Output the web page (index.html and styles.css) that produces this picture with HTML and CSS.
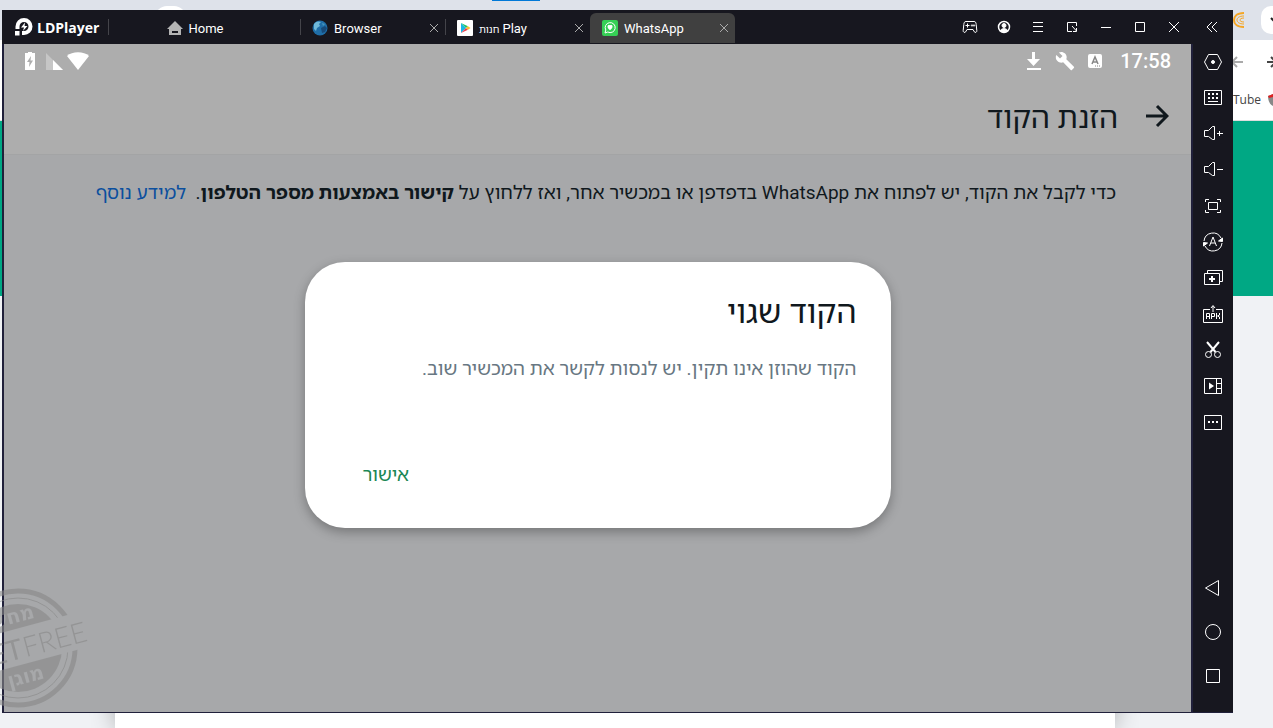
FILE: index.html
```html
<!DOCTYPE html>
<html lang="he">
<head>
    <meta charset="UTF-8">
    <meta name="viewport" content="width=device-width, initial-scale=1.0">
    <title>LDPlayer - WhatsApp</title>
    <link rel="stylesheet" href="styles.css">
</head>
<body>
    <div class="desktop">

        <!-- Browser window behind the emulator -->
        <div class="browser">
            <div class="browser-tabs">
                <div class="browser-pill"></div>
                <div class="browser-progress"></div>
                <div class="browser-end">
                    <svg class="moon" width="12" height="16" viewBox="0 0 12 16" fill="none" stroke="#f5a623"><path d="M11 1C3 1 1 5 1 8s2 7 10 7" stroke-width="2"/><path d="M11 4C6 4 4 6 4 8s2 4 7 4M11 6c-3 0-4 1-4 2s1 2 4 2"/></svg>
                    <div class="search-tabs"><svg width="10" height="6" viewBox="0 0 10 6" fill="none" stroke="#222" stroke-width="2"><path d="M1 1l4 4 4-4"/></svg></div>
                </div>
            </div>
            <div class="browser-toolbar">
                <svg width="14" height="14" viewBox="0 0 14 14" fill="none" stroke="#aaa" stroke-width="2"><path d="M14 7H3M8 2L3 7l5 5"/></svg>
                <svg width="6" height="14" viewBox="0 0 6 14" fill="none" stroke="#444" stroke-width="2"><path d="M0 7h6M4 2l5 5-5 5"/></svg>
            </div>
            <div class="browser-bookmarks">
                <a href="#">YouTube</a>
                <svg width="5" height="14" viewBox="0 0 5 14"><path d="M0 3l5-2v12C2 12 0 8 0 3z" fill="#888"/><path d="M0 3l5-2v3L1 5z" fill="#e02020"/></svg>
            </div>
            <div class="page">
                <div class="page-banner"></div>
                <div class="page-card"></div>
            </div>
        </div>

        <div class="emulator">
            <header class="titlebar">
                <div class="logo">
                    <svg width="18" height="18" viewBox="0 0 18 18"><path d="M2.500 11V8.500a6.500 6.500 0 1 1 6.500 6.500H7" fill="none" stroke="#fff" stroke-width="4"/><path d="M0 13h4.500v4.500H0z" fill="#fff"/><path d="M10 4.500L6 9.500h3L8 13l4.500-5H9.600z" fill="#fff"/></svg>
                    <span>LDPlayer</span>
                </div>
                <nav class="tabs">
                    <div class="tab tab-home">
                        <svg width="16" height="16" viewBox="0 0 16 16"><path d="M8 1l8 8h-2v6H2V9H0z" fill="#b4b4b4"/><path d="M5 11h6v2H5z" fill="#17171f"/></svg>
                        <span>Home</span>
                    </div>
                    <div class="tab">
                        <svg width="16" height="16" viewBox="0 0 16 16"><circle cx="8" cy="8" r="7.500" fill="#1f6ea8"/><path d="M2 4c2-3 5-3 7-2L7 4l1 2-3 2-1 3-2-2z" fill="#6fb8d8"/><path d="M9 8l4-2 2 2-2 4-3 1z" fill="#174a7a"/><path d="M10 3l3 1-2 2z" fill="#4796bd"/></svg>
                        <span>Browser</span>
                        <button class="close" aria-label="Close Browser"><svg width="10" height="10" viewBox="0 0 10 10"><path d="M1 1l8 8M9 1L1 9"/></svg></button>
                    </div>
                    <div class="tab">
                        <svg width="16" height="16" viewBox="0 0 16 16"><rect width="16" height="16" rx="1" fill="#fff"/><path d="M4 3v10l5-5z" fill="#19b7e6"/><path d="M4 3l5 5 2-1.800z" fill="#22c46b"/><path d="M4 13l5-5 2 1.800z" fill="#ee3d4a"/><path d="M11 6.200L9 8l2 1.800L13.500 8z" fill="#fbc02d"/></svg>
                        <span dir="ltr"><small>חנות</small> Play</span>
                        <button class="close" aria-label="Close Play"><svg width="10" height="10" viewBox="0 0 10 10"><path d="M1 1l8 8M9 1L1 9"/></svg></button>
                    </div>
                    <div class="tab tab-active">
                        <svg width="16" height="16" viewBox="0 0 16 16"><rect width="16" height="16" rx="2" fill="#36cf55"/><path d="M3 13l.800-3a5 5 0 1 1 2 2z" fill="none" stroke="#fff"/><path d="M5.500 6.500c0-1.500 1.500-2 2.500-1.200 1-.800 2.800-.300 2.500 1.500C10.300 8.500 9 9.500 8 10.200 7 9.500 5.500 8.500 5.500 6.500z" fill="#fff"/></svg>
                        <span>WhatsApp</span>
                        <button class="close" aria-label="Close WhatsApp"><svg width="10" height="10" viewBox="0 0 10 10"><path d="M1 1l8 8M9 1L1 9"/></svg></button>
                    </div>
                </nav>
                <div class="window-buttons">
                    <button aria-label="Gamepad"><svg width="16" height="14" viewBox="0 0 16 14"><path d="M4 1.500h8c1.500 0 2 1 2.200 3l.600 6c.200 2-1.500 2.500-2.500 1.300L11 9.500H5l-1.300 2.300C2.700 13 1 12.500 1.200 10.500l.600-6c.200-2 .700-3 2.200-3zM5.500 3.500v4M3.500 5.500h4"/><circle cx="10" cy="5.500" r=".7"/><circle cx="12" cy="5.500" r=".7"/></svg></button>
                    <button aria-label="Account"><svg width="14" height="14" viewBox="0 0 14 14"><circle cx="7" cy="7" r="5.500" stroke-width="1.500"/><circle cx="7" cy="5.500" r="2" fill="#fff"/><path d="M3.500 10.500c1-2.500 6-2.500 7 0-2 2-5 2-7 0z" fill="#fff"/></svg></button>
                    <button aria-label="Menu"><svg width="10" height="10" viewBox="0 0 10 10" shape-rendering="crispEdges"><path d="M0 .500h10M0 4.500h10M0 9.500h10"/></svg></button>
                    <button aria-label="Mini window"><svg width="12" height="12" viewBox="0 0 12 12"><path d="M10.500 5V1.500h-9v9H6M6 5l4.500 5M10.500 7v3.500H7"/></svg></button>
                    <button aria-label="Minimize"><svg width="10" height="10" viewBox="0 0 10 10"><path d="M0 5.500h10"/></svg></button>
                    <button aria-label="Maximize"><svg width="10" height="10" viewBox="0 0 10 10"><path d="M.500 .500h9v9h-9z"/></svg></button>
                    <button aria-label="Close"><svg width="12" height="12" viewBox="0 0 12 12"><path d="M1 1l10 10M11 1L1 11"/></svg></button>
                    <button class="collapse" aria-label="Collapse sidebar"><svg width="12" height="12" viewBox="0 0 12 12"><path d="M6 1L1 6l5 5M11 1L6 6l5 5"/></svg></button>
                </div>
            </header>

            <div class="workspace">
                <main class="screen" dir="rtl">
                    <div class="statusbar" dir="ltr">
                        <div class="status-left">
                            <svg width="12" height="20" viewBox="0 0 12 20"><path d="M4 1h4v1h3v17H1V2h3z" fill="#fff"/><path d="M7 5l-4 6h2.500L5 16l4-6.500H6.500z" fill="#adadad"/></svg>
                            <svg width="17" height="18" viewBox="0 0 17 18"><path d="M0 1v17h17z" fill="#c6c6c6"/><path d="M7 8v10h10z" fill="#fff"/></svg>
                            <svg width="22" height="18" viewBox="0 0 22 18"><path d="M0 4C5-1 17-1 22 4L11 18z" fill="#fff"/></svg>
                        </div>
                        <div class="status-right">
                            <svg width="16" height="20" viewBox="0 0 16 20" fill="#fff"><path d="M6 1h3v7h5l-6.500 7L1 8h5zM1 17h14v2H1z"/></svg>
                            <svg width="20" height="20" viewBox="0 0 24 24" fill="#fff"><path d="M22.700 19l-9.100-9.100c.900-2.300.400-5-1.500-6.900-2-2-5-2.400-7.400-1.300L9 6 6 9 1.600 4.700C.400 7.100.900 10.100 2.900 12.100c1.900 1.900 4.600 2.400 6.900 1.500l9.100 9.100c.400.400 1 .400 1.400 0l2.300-2.300c.500-.400.500-1.100.100-1.400z"/></svg>
                            <svg width="14" height="16" viewBox="0 0 14 16"><rect y="1" width="14" height="14" rx="2" fill="#fff"/><path d="M4 11l3-7 3 7M5 9h4" fill="none" stroke="#888" stroke-width="1.500"/><path d="M7 13h1M9 13h1M11 13h1" stroke="#888"/></svg>
                            <span class="clock">17:58</span>
                        </div>
                    </div>

                    <div class="app">
                        <div class="app-header">
                            <button class="back" aria-label="חזרה"><svg width="24" height="24" viewBox="0 0 24 24"><path d="M1 12h21M12 2l10 10-10 10" fill="none" stroke="#10181d" stroke-width="3"/></svg></button>
                            <h1>הזנת הקוד</h1>
                        </div>
                        <p class="instructions">כדי לקבל את הקוד, יש לפתוח את WhatsApp בדפדפן או במכשיר אחר, ואז ללחוץ על <b>קישור באמצעות מספר הטלפון</b>.&nbsp; <a href="#">למידע נוסף</a></p>

                        <div class="overlay">
                            <div class="dialog" role="alertdialog" aria-labelledby="dialog-title">
                                <h2 id="dialog-title">הקוד שגוי</h2>
                                <p>הקוד שהוזן אינו תקין. יש לנסות לקשר את המכשיר שוב.</p>
                                <button class="confirm">אישור</button>
                            </div>
                        </div>
                    </div>
                </main>

                <aside class="sidebar">
                    <button aria-label="Settings"><svg width="20" height="20" viewBox="0 0 20 20"><path d="M5.500 2.500h9l4 7.500-4 7.500h-9l-4-7.500z"/><circle cx="10" cy="10" r="1.500" fill="#fff"/></svg></button>
                    <button aria-label="Keyboard"><svg width="20" height="20" viewBox="0 0 20 20"><path d="M1.500 2.500h17v14h-17z"/><path d="M5 6h2M9 6h2M13 6h2M5 10h2M9 10h2M13 10h2" stroke-width="2"/><path d="M5 13.500h10"/></svg></button>
                    <button aria-label="Volume up"><svg width="20" height="20" viewBox="0 0 20 20"><path d="M1.500 6.500h4l4-4h2v13h-2l-4-3h-4zM14 9.500h6M16.500 7v5"/></svg></button>
                    <button aria-label="Volume down"><svg width="20" height="20" viewBox="0 0 20 20"><path d="M1.500 6.500h4l4-4h2v13h-2l-4-3h-4zM14 9.500h6"/></svg></button>
                    <button aria-label="Full screen"><svg width="20" height="20" viewBox="0 0 20 20"><path d="M5.500 6.500h9v7h-9zM2.500 6V3.500H6M14 3.500h3.500V6M17.500 14v2.500H14M6 16.500H2.500V14"/></svg></button>
                    <button aria-label="Auto rotate"><svg width="20" height="20" viewBox="0 0 20 20"><path d="M1 9a9 9 0 0 1 17-3M19 11a9 9 0 0 1-17 3M6.500 14L10 5l3.500 9M8 11h4"/><path d="M19.500 6v3.500l-4-.500zM.500 14v-3.500l4 .500z" fill="#fff"/></svg></button>
                    <button aria-label="Multi instance"><svg width="20" height="20" viewBox="0 0 20 20"><path d="M1.500 5.500h15v11h-15zM4.500 5V2.500h15v11H17"/><path d="M6 11h6M9 8v6" stroke-width="2"/></svg></button>
                    <button aria-label="Install APK"><svg width="20" height="20" viewBox="0 0 20 20"><path d="M7 5.500H.500v13h19v-13H13M10 8V2M8 4l2-2.500L12 4M3.500 15V9.500h3V15M3.500 12.500h3M8.500 15V9.500h3v3h-3M13.500 9v6M16.500 9v2l-2 1 2 1v2"/></svg></button>
                    <button aria-label="Screenshot"><svg width="20" height="20" viewBox="0 0 20 20"><path d="M4 2l8.500 10M16 2L7.500 12" stroke-width="2"/><circle cx="5.500" cy="14.500" r="3"/><circle cx="14.500" cy="14.500" r="3"/></svg></button>
                    <button aria-label="Record"><svg width="20" height="20" viewBox="0 0 20 20"><path d="M1.500 2.500h17v15h-17zM13.500 2.500v15M13.500 7.500h5M13.500 12.500h5"/><path d="M6 6.500l5 3.500-5 3.500z" fill="#fff" stroke="none"/></svg></button>
                    <button aria-label="More"><svg width="20" height="20" viewBox="0 0 20 20"><path d="M1.500 3.500h17v14h-17z"/><path d="M5 10h2M9 10h2M13 10h2" stroke-width="2"/></svg></button>
                    <div class="nav-keys">
                        <button aria-label="Back"><svg width="20" height="20" viewBox="0 0 20 20"><path d="M15.500 2.500v15L2.500 10z"/></svg></button>
                        <button aria-label="Home"><svg width="20" height="20" viewBox="0 0 20 20"><circle cx="10" cy="10" r="7.500"/></svg></button>
                        <button aria-label="Recent apps"><svg width="20" height="20" viewBox="0 0 20 20"><path d="M3.500 3.500h13v13h-13z"/></svg></button>
                    </div>
                </aside>
            </div>
        </div>

        <!-- NetFree stamp, drawn over the corner -->
        <svg class="stamp" width="90" height="124" viewBox="0 0 90 124">
            <defs>
                <mask id="band">
                    <rect x="-50" width="140" height="124" fill="#fff"/>
                    <g transform="rotate(-15 18 62)">
                        <rect x="-60" y="43" width="160" height="36" fill="#000"/>
                        <text class="stamp-word" x="15" y="37" fill="#000">מחשב</text>
                        <text class="stamp-word" x="18" y="98" fill="#000">מוגן</text>
                    </g>
                </mask>
            </defs>
            <g mask="url(#band)" opacity="0.6">
                <circle cx="18" cy="62" r="57" fill="none" stroke="#888" stroke-width="5"/>
                <circle cx="18" cy="62" r="50" fill="none" stroke="#888" stroke-width="1"/>
                <circle cx="18" cy="62" r="44" fill="#888"/>
            </g>
            <g transform="rotate(-15 18 62)" opacity="0.6" fill="#888">
                <text class="stamp-name" x="22" y="73" text-anchor="end">NET</text>
                <text class="stamp-name stamp-light" x="23" y="73">FREE</text>
            </g>
        </svg>
    </div>
</body>
</html>
```

FILE: styles.css
```css
* {
    box-sizing: border-box;
}

body {
    margin: 0;
    font-family: Roboto, "Noto Sans Hebrew", "Open Sans", "Noto Sans", sans-serif;
    color: #10181d;
}

button {
    padding: 0;
    border: none;
    background: none;
    font-family: inherit;
    cursor: pointer;
}

svg {
    display: block;
    flex-shrink: 0;
}

h1, h2, p {
    margin: 0;
    font-weight: 400;
}

a {
    text-decoration: none;
}

.desktop {
    position: relative;
    height: 100vh;
    overflow: hidden;
}

/* Browser behind */
.browser {
    display: flex;
    flex-direction: column;
    height: 100%;
    background-color: #fff;
}

.browser-tabs {
    display: flex;
    height: 40px;
    padding-left: 155px;
    background-color: #dee2ea;
}

.browser-pill {
    width: 31px;
    height: 28px;
    margin-top: 6px;
    border-radius: 12px;
    background-color: #fff;
}

.browser-progress {
    width: 48px;
    height: 1px;
    margin-left: 306px;
    background-color: #0078d7;
}

.browser-end {
    display: flex;
    gap: 16px;
    width: 40px;
    margin-left: auto;
    padding-top: 6px;
    overflow: hidden;
}

.moon {
    margin-top: 6px;
}

.search-tabs {
    display: flex;
    flex-shrink: 0;
    align-items: center;
    width: 28px;
    height: 28px;
    padding-left: 9px;
    border-radius: 10px;
    background-color: #fff;
}

.browser-toolbar {
    display: flex;
    align-items: center;
    justify-content: flex-end;
    gap: 24px;
    height: 44px;
}

.browser-bookmarks {
    display: flex;
    align-items: center;
    justify-content: flex-end;
    gap: 7px;
    height: 37px;
    padding-bottom: 5px;
    border-bottom: 1px solid #ddd;
}

.browser-bookmarks a {
    font-family: "Open Sans", sans-serif;
    font-size: 12px;
    color: #444;
}

.page {
    display: flex;
    flex: 1;
    flex-direction: column;
    justify-content: space-between;
    background-color: #f0f2f5;
}

.page-banner {
    height: 175px;
    background-color: #00a884;
}

.page-card {
    height: 50px;
    margin: 0 158px 0 115px;
    background-color: #fff;
    box-shadow: 0 0 24px rgba(0, 0, 0, 0.3);
}

/* Emulator window */
.emulator {
    position: absolute;
    top: 10px;
    right: 40px;
    bottom: 15px;
    left: 2px;
    display: flex;
    flex-direction: column;
    background-color: #17171f;
}

.titlebar {
    display: flex;
    flex-shrink: 0;
    height: 34px;
    color: #fff;
}

.logo {
    display: flex;
    align-items: center;
    gap: 4px;
    width: 106px;
    padding-left: 13px;
    font-family: "Open Sans", sans-serif;
    font-size: 14px;
    font-weight: 700;
}

.tabs {
    display: flex;
    align-items: flex-end;
}

.tab {
    position: relative;
    display: flex;
    align-items: center;
    gap: 6px;
    width: 145px;
    height: 30px;
    margin-bottom: 1px;
    padding: 0 6px 0 12px;
    font-size: 13px;
}

.tab small {
    font-size: 10px;
}

.tab::before {
    position: absolute;
    top: 6px;
    left: 0;
    width: 1px;
    height: 16px;
    background-color: #44444a;
    content: "";
}

.tab-home {
    justify-content: center;
    width: 192px;
    padding: 0 18px 0 0;
}

.tab-active {
    border-radius: 6px 6px 0 0;
    background-color: #404040;
}

.tab-active::before {
    display: none;
}

.close {
    margin-left: auto;
}

.close svg {
    stroke: #aaa;
}

.window-buttons {
    display: flex;
    margin-left: auto;
}

.window-buttons button {
    display: flex;
    align-items: center;
    justify-content: center;
    width: 34px;
}

.window-buttons .collapse {
    width: 42px;
}

.window-buttons svg,
.sidebar svg {
    fill: none;
    stroke: #fff;
}

.workspace {
    display: flex;
    flex: 1;
    min-height: 0;
    border: 2px solid #20203a;
    border-width: 0 0 1px 2px;
}

.sidebar {
    display: flex;
    flex-direction: column;
    width: 42px;
    padding-bottom: 14px;
    border-left: 2px solid #20203a;
}

.sidebar button {
    display: flex;
    align-items: center;
    justify-content: center;
    width: 100%;
    height: 36px;
}

.nav-keys {
    margin-top: auto;
}

.nav-keys button {
    height: 44px;
}

/* Android screen */
.screen {
    display: flex;
    flex: 1;
    flex-direction: column;
    background-color: #a7a8aa;
}

.statusbar {
    display: flex;
    align-items: center;
    justify-content: space-between;
    height: 34px;
    padding: 0 20px;
    background-color: #adadad;
}

.status-left {
    display: flex;
    align-items: center;
    gap: 4px;
}

.status-left svg:first-child {
    margin-right: 6px;
}

.status-right {
    display: flex;
    align-items: center;
    gap: 13px;
}

.clock {
    margin-left: 5px;
    font-size: 20px;
    font-weight: 500;
    color: #fff;
}

.app {
    position: relative;
    flex: 1;
}

.app-header {
    display: flex;
    align-items: center;
    gap: 27px;
    height: 77px;
    padding: 0 22px;
    border-bottom: 1px solid #a3a4a5;
    background-color: #adadad;
}

.app-header h1 {
    font-size: 30px;
}

.instructions {
    padding: 23px 75px;
    font-size: 19px;
    line-height: 30px;
}

.instructions a {
    color: #0b4f9e;
}

.overlay {
    position: absolute;
    inset: 0;
    display: flex;
    align-items: center;
    justify-content: center;
}

.dialog {
    display: flex;
    flex-direction: column;
    width: 90%;
    max-width: 586px;
    padding: 28px 34px;
    border-radius: 40px;
    background-color: #fff;
    box-shadow: 0 4px 12px rgba(0, 0, 0, 0.3);
}

.dialog h2 {
    font-size: 32px;
    line-height: 44px;
}

.dialog p {
    margin-top: 20px;
    font-size: 19px;
    line-height: 30px;
    color: #687782;
}

.confirm {
    align-self: flex-end;
    margin: 76px 0 10px 24px;
    font-size: 19px;
    line-height: 30px;
    color: #1b8755;
}

.stamp {
    position: absolute;
    bottom: 18px;
    left: 0;
}

.stamp-word {
    font-family: "DejaVu Sans", sans-serif;
    font-size: 20px;
    font-weight: 700;
    text-anchor: middle;
}

.stamp-name {
    font-family: Lato, sans-serif;
    font-size: 28px;
}

.stamp-light {
    font-weight: 300;
}
```
